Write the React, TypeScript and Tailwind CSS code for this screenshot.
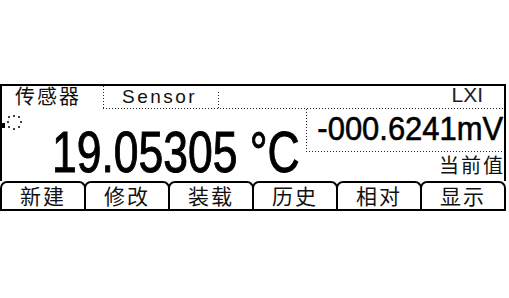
import React from 'react';

const FONT = { fontFamily: '"Liberation Sans", "Noto Sans CJK SC", sans-serif' };

// dotted rules, 1px dot every 3px like the instrument LCD
function DotH({ className = '' }: { className?: string }) {
  return <div className={`h-px shrink-0 bg-[linear-gradient(to_right,#222_1px,transparent_1px)] bg-[length:3px_1px] ${className}`} />;
}

function DotV({ className = '' }: { className?: string }) {
  return <div className={`w-px shrink-0 bg-[linear-gradient(to_bottom,#222_1px,transparent_1px)] bg-[length:1px_3px] ${className}`} />;
}

function BusyIcon() {
  const dots = Array.from({ length: 8 }, (_, i) => {
    const a = (i / 8) * Math.PI * 2;
    return { x: 14 + Math.cos(a) * 6.5, y: 10 + Math.sin(a) * 6.5 };
  });
  return (
    <svg width="22" height="20" viewBox="0 0 22 20" className="-ml-[2px] mt-[3px] shrink-0">
      {dots.map((d, i) => (
        <rect key={i} x={Math.round(d.x) - 1} y={Math.round(d.y) - 1} width="2" height="2" fill="#444" />
      ))}
      <rect x="0" y="11" width="5" height="5" fill="#000" />
    </svg>
  );
}

const softkeys = ['新建', '修改', '装载', '历史', '相对', '显示'];

export default function App() {
  return (
    <div className="w-[509px] h-[298px] bg-white overflow-hidden text-[#111]" style={FONT}>
      <div className="mt-[84px] w-[506px] flex flex-col">
        {/* top panel */}
        <div className="border-t-2 border-x-2 border-black flex flex-col">
          {/* header */}
          <div className="flex h-[23px]">
            <div className="w-[101px] shrink-0 pl-[13px] text-[20px] leading-[20px] tracking-[2px] pt-[1px]">传感器</div>
            <div className="flex-1 flex flex-col">
              <div className="flex flex-1">
                <DotV />
                <div className="w-[114px] pl-[18px] text-[19px] leading-[20px] tracking-[2.5px] pt-[1px]">Sensor</div>
                <DotV className="mt-[6px]" />
                <div className="flex-1" />
                <div className="pr-[21px] text-[21px] leading-[18px] text-[#222]">LXI</div>
              </div>
              <DotH />
            </div>
          </div>

          {/* readings */}
          <div className="flex h-[72px]">
            <div className="w-[304px] shrink-0 flex items-start">
              <BusyIcon />
              <div className="ml-[30px] mt-[15px] shrink-0 whitespace-nowrap inline-block origin-left scale-x-[0.78] text-[57px] leading-[57px] text-black [-webkit-text-stroke:1px_black]">
                19.05305 °C
              </div>
            </div>
            <div className="flex-1 min-w-0 flex flex-col">
              <div className="flex h-[42px]">
                <DotV />
                <div className="flex-1 min-w-0 flex justify-end pr-[1px]">
                  <div className="mt-[2px] shrink-0 whitespace-nowrap inline-block origin-right scale-x-[0.91] text-[34px] leading-[34px] text-black [-webkit-text-stroke:0.6px_black]">
                    -000.6241mV
                  </div>
                </div>
              </div>
              <DotH />
              <div className="flex justify-end pt-[4px] pr-[1px]">
                <div className="text-[20px] leading-[20px] tracking-[2px] -mr-[2px]">当前值</div>
              </div>
            </div>
          </div>
        </div>

        {/* softkeys */}
        <div className="flex border-b-2 border-black">
          {softkeys.map((k, i) => (
            <div
              key={k}
              className={`flex-1 h-[28px] border-t-2 border-x-2 border-black rounded-t-[7px] flex items-center justify-center text-[21px] leading-none tracking-[2px] pt-[1px] ${i > 0 ? '-ml-[2px]' : ''}`}
            >
              {k}
            </div>
          ))}
        </div>
      </div>
    </div>
  );
}
